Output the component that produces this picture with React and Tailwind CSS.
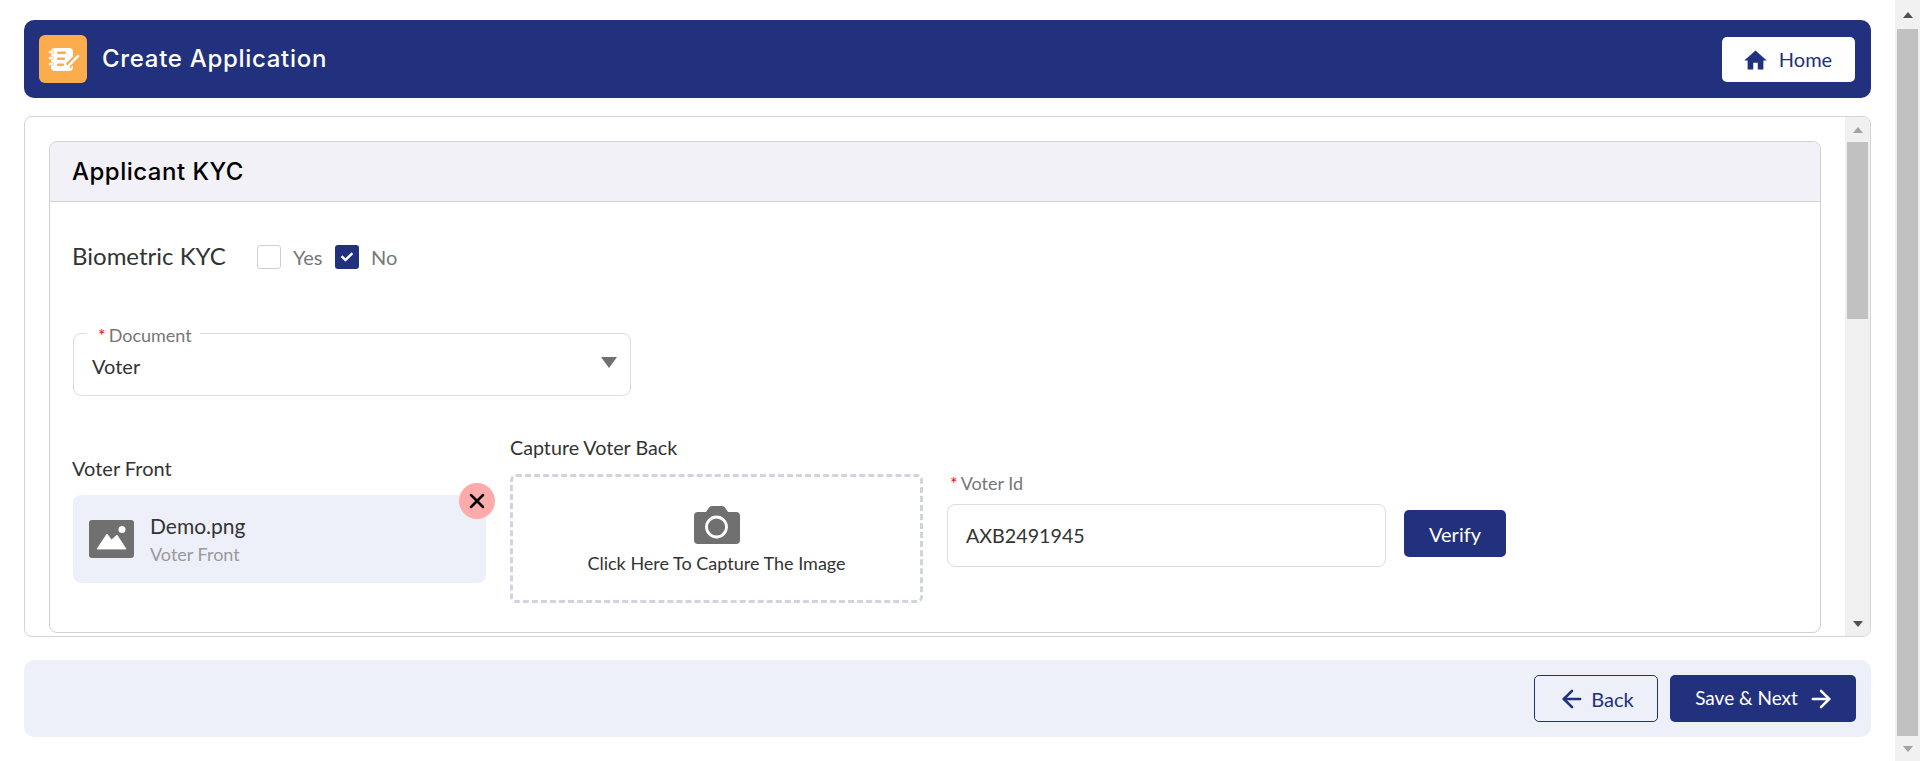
import { MdHome } from "react-icons/md";
import { FaCheck } from "react-icons/fa";
import { ArrowLeft, ArrowRight, X } from "lucide-react";

function NotebookIcon() {
  return (
    <svg width="36" height="36" viewBox="0 0 36 36" fill="none">
      <rect x="6" y="7" width="22" height="23" rx="4" fill="#fff" />
      <rect x="3.5" y="9.5" width="5" height="3" rx="1.5" fill="#fff" stroke="#fbad4d" strokeWidth="0.6" />
      <rect x="3.5" y="15.5" width="5" height="3" rx="1.5" fill="#fff" stroke="#fbad4d" strokeWidth="0.6" />
      <rect x="3.5" y="21.5" width="5" height="3" rx="1.5" fill="#fff" stroke="#fbad4d" strokeWidth="0.6" />
      <rect x="12" y="10.5" width="9" height="2.6" rx="1" fill="#fbad4d" />
      <rect x="12" y="16.5" width="8" height="2.6" rx="1" fill="#fbad4d" />
      <rect x="12" y="22.5" width="7" height="2.6" rx="1" fill="#fbad4d" />
      <path d="M33 15 L23 25" stroke="#fbad4d" strokeWidth="6.5" />
      <path d="M33 15 L24 24.5 L23 26.5" stroke="#fff" strokeWidth="2.4" strokeLinecap="round" />
    </svg>
  );
}

function ImageIcon() {
  return (
    <svg width="45" height="38" viewBox="0 0 45 38" className="shrink-0">
      <rect width="45" height="38" rx="3" fill="#707070" />
      <circle cx="33" cy="9.5" r="3.5" fill="#fff" />
      <path d="M8 29 L18 14 L22.5 20 L28 15 L37 29 Z" fill="#fff" stroke="#fff" strokeWidth="0.8" strokeLinejoin="round" />
    </svg>
  );
}

function CameraIcon() {
  return (
    <svg width="46" height="38" viewBox="0 0 46 38">
      <path d="M4 6h8l3-4.500Q16 0 18 0h10q2 0 3 1.500L34 6h8a4 4 0 0 1 4 4v24a4 4 0 0 1-4 4H4a4 4 0 0 1-4-4V10a4 4 0 0 1 4-4z" fill="#707070" />
      <circle cx="22.500" cy="21" r="10" fill="none" stroke="#fff" strokeWidth="2.800" />
    </svg>
  );
}

function Scrollbar({ outer }) {
  return (
    <div className={outer ? "w-[25px] h-[761px] bg-[#f1f1f1] flex flex-col items-center shrink-0" : "w-[25px] bg-[#f0f0f0] flex flex-col items-center shrink-0"}>
      <div className={outer ? "h-[29px] flex items-center justify-center" : "h-[25px] flex items-center justify-center"}>
        <div className={"w-0 h-0 border-x-[5.5px] border-x-transparent border-b-[6px] " + (outer ? "border-b-[#505050]" : "border-b-[#a3a3a3]")} />
      </div>
      <div className={outer ? "w-[21px] h-[707px] bg-[#c1c1c1]" : "w-[21px] h-[177px] bg-[#c1c1c1]"} />
      <div className="flex-1" />
      <div className="h-[25px] flex items-center justify-center">
        <div className={"w-0 h-0 border-x-[5.5px] border-x-transparent border-t-[6px] " + (outer ? "border-t-[#a3a3a3]" : "border-t-[#505050]")} />
      </div>
    </div>
  );
}

export default function App() {
  return (
    <div className="flex h-[761px] overflow-hidden bg-white font-['Lato',sans-serif] text-[#333]">
      <main className="flex-1 px-6 pt-5">
        {/* Header */}
        <header className="h-[78px] bg-[#22317d] rounded-[10px] flex items-center justify-between pl-[15px] pr-4">
          <div className="flex items-center gap-[15px]">
            <div className="w-12 h-12 bg-[#fbad4d] rounded-md flex items-center justify-center">
              <NotebookIcon />
            </div>
            <h1 className="text-2xl font-medium tracking-[0.7px] text-white font-['Inter',sans-serif]">Create Application</h1>
          </div>
          <button className="w-[133px] h-[45px] bg-white rounded-[5px] flex items-center justify-center gap-[10px] pr-[3px] text-xl text-[#22317d]">
            <MdHome size={27} className="mt-[3px]" />
            Home
          </button>
        </header>

        {/* Main card */}
        <div className="mt-[18px] h-[521px] flex border border-[#d5d5d5] rounded-lg overflow-hidden">
          <div className="flex-1 pt-6 px-6">
            <section className="h-[492px] border border-[#d0d0d5] rounded-lg overflow-hidden">
              <div className="h-[60px] bg-[#f1f1f7] border-b border-[#d0d0d5] flex items-center pl-[22px]">
                <h2 className="text-2xl font-medium tracking-[0.5px] text-black font-['Inter',sans-serif]">Applicant KYC</h2>
              </div>
              <div className="pl-[23px]">
                <div className="flex items-center h-6 mt-[43px]">
                  <span className="text-2xl w-[185px] -mt-[2px] -ml-px">Biometric KYC</span>
                  <span className="w-6 h-6 border border-[#cfcfcf] rounded-[3px]" />
                  <span className="ml-3 w-[42px] text-xl text-[#777]">Yes</span>
                  <span className="w-6 h-6 bg-[#22317d] rounded-[3px] flex items-center justify-center">
                    <FaCheck size={12} className="text-white" />
                  </span>
                  <span className="ml-3 text-xl text-[#777]">No</span>
                </div>

                {/* Document */}
                <div className="relative mt-16 w-[558px] h-[63px] border border-[#dcdcdc] rounded-lg pl-[18px] pr-[13px] pt-[3px] flex items-center justify-between">
                  <label className="absolute -top-[11px] left-[13px] bg-white pl-[11px] pr-2 text-lg leading-6 text-[#777]">
                    <span className="text-[#f00] mr-[3px]">*</span>Document
                  </label>
                  <span className="text-xl leading-6">Voter</span>
                  <span className="w-0 h-0 border-x-[8px] border-x-transparent border-t-[11px] border-t-[#707070] -mt-[7px]" />
                </div>

                {/* Upload row */}
                <div className="flex mt-10">
                  <div className="w-[413px] mr-6 pt-5">
                    <p className="text-xl leading-6 -ml-px">Voter Front</p>
                    <div className="relative mt-[15px] h-[88px] bg-[#edf0f8] rounded-lg flex items-center pl-4 gap-4">
                      <ImageIcon />
                      <div className="self-start pt-[19px]">
                        <p className="text-[21px] leading-6">Demo.png</p>
                        <p className="text-lg leading-6 mt-1 text-[#999]">Voter Front</p>
                      </div>
                      <button className="absolute -right-[9px] -top-3 w-9 h-9 rounded-full bg-[#ffabab] flex items-center justify-center text-black">
                        <X size={24} strokeWidth={2.5} />
                      </button>
                    </div>
                  </div>
                  <div className="w-[413px]">
                    <p className="text-[19.7px] leading-6">Capture Voter Back</p>
                    <div className="mt-[14px] h-[129px] border-[3px] border-dashed border-[#d0d5dd] rounded-md flex flex-col items-center pt-[29px]">
                      <CameraIcon />
                      <p className="text-lg leading-6 mt-[7px]">Click Here To Capture The Image</p>
                    </div>
                  </div>
                  <div className="ml-6 pt-[35px] w-[439px]">
                    <p className="text-lg leading-6 pl-[3px] text-[#777]"><span className="text-[#f00] mr-[3px]">*</span>Voter Id</p>
                    <div className="mt-[9px] h-[63px] border border-[#dcdcdc] rounded-lg flex items-center pl-[18px] text-[19.7px]">AXB2491945</div>
                  </div>
                  <div className="ml-[18px] pt-[74px]">
                    <button className="w-[102px] h-[47px] bg-[#22317d] text-white text-xl rounded-[5px]">Verify</button>
                  </div>
                </div>
              </div>
            </section>
          </div>
          <Scrollbar />
        </div>

        {/* Footer */}
        <footer className="mt-[23px] h-[77px] bg-[#edf0f8] rounded-[10px] flex items-center justify-end gap-3 pr-[15px]">
          <button className="w-[124px] h-[47px] border border-[#22317d] rounded-[5px] flex items-center justify-center gap-[5px] text-xl text-[#22317d]">
            <ArrowLeft size={28} strokeWidth={2.2} />
            Back
          </button>
          <button className="w-[186px] h-[47px] bg-[#22317d] rounded-[5px] flex items-center justify-center gap-[9px] pl-1 text-[19px] text-white">
            Save &amp; Next
            <ArrowRight size={28} strokeWidth={2.2} />
          </button>
        </footer>
      </main>
      <Scrollbar outer />
    </div>
  );
}
